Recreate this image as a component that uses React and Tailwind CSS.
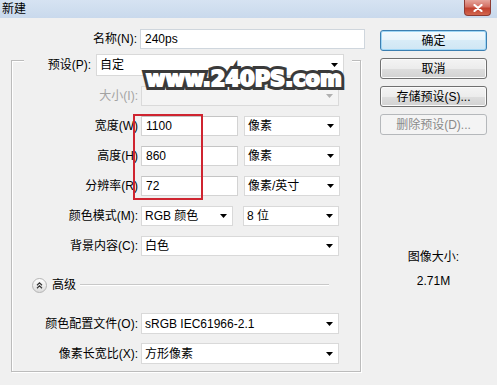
const Arrow = ({ disabled }) => (
  <svg width="7" height="4" viewBox="0 0 7 4" className="shrink-0">
    <path d="M0 0H7L3.5 4Z" fill={disabled ? "#b0b0b0" : "#000"} />
  </svg>
);

const Select = ({ w, h = "h-[20px]", children, disabled }) => (
  <div
    className={`${w} ${h} flex items-center justify-between pl-[3px] pr-[5px] border ${
      disabled ? "bg-[#f4f4f4] border-[#dadada]" : "bg-white border-[#d9d9d9]"
    }`}
  >
    <span className="leading-none">{children}</span>
    <Arrow disabled={disabled} />
  </div>
);

const Input = ({ w, children }) => (
  <div className={`${w} h-[20px] flex items-center pl-[4px] bg-white border border-[#d3d3d3] border-t-[#c4c4c4]`}>
    <span className="leading-none">{children}</span>
  </div>
);

const Label = ({ children, w = "w-[126px]", muted }) => (
  <div className={`${w} text-right shrink-0 leading-none ${muted ? "text-[#a3a3a3]" : "text-black"}`}>{children}</div>
);

const Btn = ({ children, primary, disabled }) => (
  <div
    className={`h-[21px] w-full rounded-[3px] border flex items-center justify-center leading-none ${
      disabled
        ? "border-[#b5b8bb] bg-[#f4f4f4] text-[#8a8a8a]"
        : primary
        ? "border-[#3c7fb1] bg-[linear-gradient(#f2f9fd_0%,#e8f4fb_50%,#d8ecf7_50%,#cfe6f4_100%)] shadow-[inset_0_0_0_1px_#9fd6f5] text-black"
        : "border-[#707070] bg-[linear-gradient(#f4f4f4_0%,#ececec_50%,#dedede_50%,#d2d2d2_100%)] shadow-[inset_0_0_0_1px_#fbfbfb] text-black"
    }`}
  >
    {children}
  </div>
);

export default function App() {
  return (
    <div className="w-[497px] h-[385px] bg-[#f0f0f0] relative overflow-hidden text-[12px] font-['Liberation_Sans','Noto_Sans_CJK_SC',sans-serif] text-black">
      {/* title bar */}
      <div className="h-[18px] flex items-start justify-between bg-[linear-gradient(#d6e3f2,#c9d9ec)]">
        <div className="pl-[2px] pt-[3px] leading-none text-[12px]">新建</div>
        <div className="mr-[6px] w-[27px] h-[16px] rounded-b-[4px] border border-t-0 border-[#8d3b34] bg-[linear-gradient(#e6a59c_0%,#d36f62_45%,#c1412f_55%,#d2674f_100%)] flex items-center justify-center">
          <svg width="10" height="8" viewBox="0 0 10 8">
            <path d="M1.5 1L8.5 7M8.5 1L1.5 7" stroke="#fff" strokeWidth="2.2" strokeLinecap="round" />
          </svg>
        </div>
      </div>

      <div className="flex">
        {/* left column */}
        <div className="w-[370px] shrink-0">
          <div className="mt-[11px] flex items-center h-[20px]">
            <Label w="w-[137px]">名称(N):</Label>
            <div className="ml-[3px]">
              <div className="w-[225px] h-[20px] flex items-center pl-[4px] bg-white border border-[#cfd6dd]">
                <span className="leading-none">240ps</span>
              </div>
            </div>
          </div>

          {/* group box */}
          <div className="mt-[11px] ml-[11px] w-[350px] h-[312px] border border-[#bcbcbc] shadow-[1px_1px_0_#fff,inset_1px_1px_0_#fff]">
            {/* legend row */}
            <div className="mt-[-7px] ml-[12px] w-[328px] h-[22px] flex items-center bg-[#f0f0f0]">
              <Label w="w-[67px]">预设(P):</Label>
              <div className="ml-[5px]">
                <Select w="w-[248px]" h="h-[22px]">自定</Select>
              </div>
            </div>

            <div className="mt-[10px] flex items-center h-[20px]">
              <Label muted>大小(I):</Label>
              <div className="ml-[3px]">
                <Select w="w-[198px]" disabled> </Select>
              </div>
            </div>

            <div className="mt-[10px] flex items-center h-[20px]">
              <Label>宽度(W)</Label>
              <div className="ml-[3px] flex gap-[6px]">
                <Input w="w-[97px]">1100</Input>
                <Select w="w-[96px]">像素</Select>
              </div>
            </div>

            <div className="mt-[10px] flex items-center h-[20px]">
              <Label>高度(H)</Label>
              <div className="ml-[3px] flex gap-[6px]">
                <Input w="w-[97px]">860</Input>
                <Select w="w-[96px]">像素</Select>
              </div>
            </div>

            <div className="mt-[10px] flex items-center h-[20px]">
              <Label>分辨率(R)</Label>
              <div className="ml-[3px] flex gap-[6px]">
                <Input w="w-[97px]">72</Input>
                <Select w="w-[96px]">像素/英寸</Select>
              </div>
            </div>

            <div className="mt-[10px] flex items-center h-[20px]">
              <Label>颜色模式(M):</Label>
              <div className="ml-[3px] flex gap-[10px]">
                <Select w="w-[92px]">RGB 颜色</Select>
                <Select w="w-[96px]">8 位</Select>
              </div>
            </div>

            <div className="mt-[10px] flex items-center h-[20px]">
              <Label>背景内容(C):</Label>
              <div className="ml-[3px]">
                <Select w="w-[198px]">白色</Select>
              </div>
            </div>

            {/* advanced */}
            <div className="mt-[21px] ml-[20px] mr-[31px] flex items-center h-[16px]">
              <div className="w-[15px] h-[15px] rounded-full border border-[#b4b4b4] bg-[linear-gradient(#ffffff,#dcdcdc)] flex items-center justify-center shrink-0">
                <svg width="7" height="7" viewBox="0 0 7 7">
                  <path d="M1 3.2L3.5 0.9L6 3.2M1 6.2L3.5 3.9L6 6.2" stroke="#333" strokeWidth="1.2" fill="none" />
                </svg>
              </div>
              <span className="ml-[5px] leading-none">高级</span>
              <div className="ml-[4px] flex-1 h-[2px] border-t border-[#c8c8c8] border-b border-b-white" />
            </div>

            <div className="mt-[20px] flex items-center h-[21px]">
              <Label>颜色配置文件(O):</Label>
              <div className="ml-[3px]">
                <Select w="w-[198px]" h="h-[21px]">sRGB IEC61966-2.1</Select>
              </div>
            </div>

            <div className="mt-[9px] flex items-center h-[21px]">
              <Label>像素长宽比(X):</Label>
              <div className="ml-[3px]">
                <Select w="w-[198px]" h="h-[21px]">方形像素</Select>
              </div>
            </div>
          </div>
        </div>

        {/* right column */}
        <div className="ml-[10px] w-[107px] pt-[12px] flex flex-col">
          <div className="flex flex-col gap-[7px]">
            <Btn primary>确定</Btn>
            <Btn>取消</Btn>
            <Btn>存储预设(S)...</Btn>
            <Btn disabled>删除预设(D)...</Btn>
          </div>
          <div className="mt-[114px] flex flex-col items-center gap-[8px] leading-[16px]">
            <div>图像大小:</div>
            <div>2.71M</div>
          </div>
        </div>
      </div>

      {/* annotation overlay */}
      <div className="absolute left-[133px] top-[114px] w-[70px] h-[86px] border-2 border-[#cf2430]" />

      {/* watermark */}
      <div className="absolute left-[146px] top-[65px] text-[21px] font-bold leading-[28px] font-['DejaVu_Sans',sans-serif] tracking-[0px]">
        <span className="text-[#3a3a3a] [-webkit-text-stroke:8px_#3a3a3a] [text-shadow:1px_2px_2px_rgba(0,0,0,0.5)]">
          www.240PS.com
        </span>
        <span className="absolute left-0 top-0 text-white [-webkit-text-stroke:2px_#ffffff]">www.240PS.com</span>
      </div>
    </div>
  );
}
